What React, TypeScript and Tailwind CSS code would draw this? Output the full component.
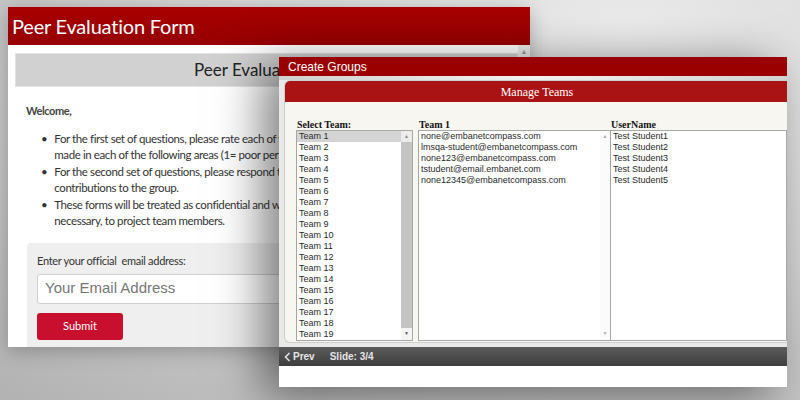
import React from 'react'

const TEAMS = Array.from({ length: 19 }, (_, i) => `Team ${i + 1}`)

const EMAILS = [
  'none@embanetcompass.com',
  'lmsqa-student@embanetcompass.com',
  'none123@embanetcompass.com',
  'tstudent@email.embanet.com',
  'none12345@embanetcompass.com',
]

const USERS = ['Test Student1', 'Test Student2', 'Test Student3', 'Test Student4', 'Test Student5']

function BackWindow() {
  return (
    <div className="absolute left-[8px] top-[7px] w-[522px] h-[340px] flex flex-col bg-white shadow-[0_4px_18px_rgba(0,0,0,0.25)] font-['Lato',sans-serif]">
      <div className="h-[38px] shrink-0 bg-gradient-to-b from-[#a80000] to-[#960000] text-white text-[20px] tracking-[-0.2px] pl-[4px] flex items-center">
        Peer Evaluation Form
      </div>
      <div className="flex flex-1 min-h-0">
        <div className="flex-1 min-w-0 overflow-hidden pl-[7px] pt-[8px] flex flex-col">
          <div className="h-[34px] shrink-0 bg-[#d1d1d1] border border-[#e2e2e2] text-[#222] text-[17px] flex items-center pl-[178px]">
            Peer Evaluation Form
          </div>
          <div className="pl-[11px] pt-[16px] text-[11.5px] tracking-[-0.4px] text-[#333]">
            <div className="font-bold text-[11px] text-[#444]">Welcome,</div>
            <ul className="mt-[11px] pl-[15px] flex flex-col leading-[16.6px] whitespace-nowrap">
              <li className="flex gap-[7px]">
                <span>•</span>
                <span>
                  For the first set of questions, please rate each of your team members on the contributions they
                  <br />
                  made in each of the following areas (1= poor performance, 5= excellent performance).
                </span>
              </li>
              <li className="flex gap-[7px]">
                <span>•</span>
                <span>
                  For the second set of questions, please respond to the questions about your team members'
                  <br />
                  contributions to the group.
                </span>
              </li>
              <li className="flex gap-[7px]">
                <span>•</span>
                <span>
                  These forms will be treated as confidential and will only be shared, if
                  <br />
                  necessary, to project team members.
                </span>
              </li>
            </ul>
          </div>
          <div className="mt-[13px] ml-[12px] flex-1 bg-[#efefef] rounded-t-[4px] px-[10px] pt-[10px]">
            <div className="text-[11px] tracking-[-0.3px] text-[#333]">Enter your official&nbsp; email address:</div>
            <div className="mt-[4px] h-[30px] w-[470px] bg-white border border-[#cfcfcf] rounded-[3px] flex items-center pl-[7px] text-[15px] text-[#777] font-['Liberation_Sans',sans-serif]">
              Your Email Address
            </div>
            <div className="mt-[9px] w-[86px] h-[27px] bg-[#c8102e] rounded-[3px] text-white text-[11px] flex items-center justify-center">
              Submit
            </div>
          </div>
        </div>
        <div className="w-[12px] shrink-0 bg-[#ececec] flex justify-center">
          <span className="text-[7px] text-[#999] leading-[12px]">▲</span>
        </div>
      </div>
    </div>
  )
}

function ListBox({
  items,
  width,
  selected,
  scroll,
}: {
  items: string[]
  width?: string
  selected?: number
  scroll: 'thumb' | 'light' | 'none'
}) {
  return (
    <div className={`h-[211px] bg-white border border-[#a7a7a7] flex font-['Liberation_Sans',Arial,sans-serif] ${width ?? 'flex-1'}`}>
      <div className="flex-1 min-w-0 overflow-hidden">
        {items.map((it, i) => (
          <div
            key={it}
            className={`h-[11px] leading-[11px] pl-[2px] text-[9px] text-[#2a2a2a] whitespace-nowrap ${
              i === selected ? 'bg-[#d4d4d4]' : ''
            }`}
          >
            {it}
          </div>
        ))}
      </div>
      {scroll === 'thumb' && (
        <div className="w-[11px] shrink-0 flex flex-col bg-[#c4c4c4]">
          <div className="h-[11px] bg-[#ececec] text-[5px] text-[#888] flex items-center justify-center">▲</div>
          <div className="flex-1" />
          <div className="h-[12px] bg-[#f4f4f4] text-[5px] text-[#555] flex items-center justify-center">▼</div>
        </div>
      )}
      {scroll === 'light' && (
        <div className="w-[10px] shrink-0 flex flex-col justify-between bg-[#fbfbfb]">
          <div className="h-[11px] text-[5px] text-[#aaa] flex items-center justify-center">▲</div>
          <div className="h-[12px] text-[5px] text-[#aaa] flex items-center justify-center">▼</div>
        </div>
      )}
    </div>
  )
}

function FrontWindow() {
  return (
    <div className="absolute left-[279px] top-[57px] w-[508px] h-[330px] flex flex-col bg-white shadow-[-16px_8px_44px_rgba(0,0,0,0.5)] font-['Liberation_Sans',Arial,sans-serif]">
      <div className="h-[19px] shrink-0 bg-[#9b0000] text-white text-[12px] pl-[9px] flex items-center">
        Create Groups
      </div>
      <div className="h-[4px] shrink-0 bg-gradient-to-r from-[#cfcfcf] via-[#f2f2f2] to-[#d2d2d2]" />
      <div className="shrink-0 bg-[#e9e9e9] pl-[5px] pb-[4px]">
        <div className="h-[263px] rounded-[6px] rounded-r-none border border-r-0 border-[#cdcdcd] bg-[#f7f6f1] flex flex-col overflow-hidden">
          <div className="h-[21px] shrink-0 bg-[#a91313] text-white text-[12px] font-['Liberation_Serif',serif] flex items-center justify-center pl-[2px]">
            Manage Teams
          </div>
          <div className="flex gap-[5px] pl-[11px] pt-[17px] font-['Liberation_Serif',serif]">
            <div className="flex flex-col w-[117px]">
              <div className="text-[10px] font-bold leading-[11px] text-[#111] pl-[1px]">Select Team:</div>
              <ListBox items={TEAMS} width="w-[117px]" selected={0} scroll="thumb" />
            </div>
            <div className="flex flex-col w-[192px]">
              <div className="text-[10px] font-bold leading-[11px] text-[#111] pl-[1px]">Team 1</div>
              <ListBox items={EMAILS} width="w-[193px]" scroll="light" />
            </div>
            <div className="flex flex-col flex-1 -ml-[5px]">
              <div className="text-[10px] font-bold leading-[11px] text-[#111] pl-[1px]">UserName</div>
              <ListBox items={USERS} scroll="none" />
            </div>
          </div>
        </div>
      </div>
      <div className="h-[19px] shrink-0 bg-gradient-to-b from-[#5c5c5c] to-[#3e3e3e] text-[#e4e4e4] text-[10px] font-bold flex items-center pl-[5px]">
        <svg width="7" height="10" viewBox="0 0 7 10" className="mr-[2px]">
          <path d="M5.5 1 L1.5 5 L5.5 9" fill="none" stroke="#e4e4e4" strokeWidth="1.6" />
        </svg>
        <span>Prev</span>
        <span className="ml-[15px]">Slide: 3/4</span>
      </div>
      <div className="flex-1 bg-white" />
    </div>
  )
}

export default function App() {
  return (
    <div className="relative w-[800px] h-[400px] overflow-hidden bg-[radial-gradient(ellipse_at_78%_8%,#ebebeb_0%,#d3d3d3_50%,#b2b2b2_100%)]">
      <BackWindow />
      <FrontWindow />
    </div>
  )
}
